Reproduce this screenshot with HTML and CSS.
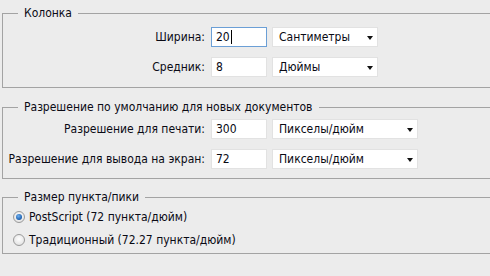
FILE: index.html
```html
<!DOCTYPE html>
<html lang="ru">
<head>
<meta charset="utf-8">
<title>Единицы измерения</title>
<link rel="stylesheet" href="styles.css">
</head>
<body>
<div class="panel">
  <fieldset class="group group-column">
    <legend>Колонка</legend>
    <div class="grid">
      <label class="lbl">Ширина:</label>
      <div class="field focused"><span>20</span><span class="caret"></span></div>
      <div class="dropdown narrow"><span>Сантиметры</span><span class="arrow"></span></div>

      <label class="lbl">Средник:</label>
      <div class="field"><span>8</span></div>
      <div class="dropdown narrow"><span>Дюймы</span><span class="arrow"></span></div>
    </div>
  </fieldset>

  <fieldset class="group group-res">
    <legend>Разрешение по умолчанию для новых документов</legend>
    <div class="grid">
      <label class="lbl">Разрешение для печати:</label>
      <div class="field"><span>300</span></div>
      <div class="dropdown wide"><span>Пикселы/дюйм</span><span class="arrow"></span></div>

      <label class="lbl">Разрешение для вывода на экран:</label>
      <div class="field"><span>72</span></div>
      <div class="dropdown wide"><span>Пикселы/дюйм</span><span class="arrow"></span></div>
    </div>
  </fieldset>

  <fieldset class="group group-pt">
    <legend>Размер пункта/пики</legend>
    <div class="radios">
      <div class="radio-row"><span class="radio checked"></span><span>PostScript (72 пункта/дюйм)</span></div>
      <div class="radio-row"><span class="radio"></span><span>Традиционный (72.27 пункта/дюйм)</span></div>
    </div>
  </fieldset>
</div>
</body>
</html>
```
FILE: styles.css
```css
html, body {
  margin: 0;
  padding: 0;
  background: #ececec;
  overflow: hidden;
}
body {
  font-family: "DejaVu Sans", sans-serif;
  font-stretch: semi-condensed;
  font-size: 12px;
  color: #0a0a14;
  width: 490px;
  height: 276px;
}
.panel {
  padding: 6px 0 0 2px;
}
.group {
  margin: 0;
  border: 1px solid #a3a3a3;
  border-right: none;
  padding: 0;
  min-width: 0;
}
.group legend {
  margin-left: 15px;
  padding: 0 6px;
  height: 15px;
  line-height: 15px;
}
.group-column { padding: 6px 0 10px 0; }
.group-res { margin-top: 12px; padding: 4px 0 9px 0; }
.group-pt { margin-top: 11px; padding: 1px 0 2px 0; }

.grid {
  display: grid;
  grid-template-columns: 202px 56px auto;
  column-gap: 6px;
  row-gap: 10px;
  align-items: center;
}
.lbl {
  text-align: right;
  white-space: nowrap;
}
.field {
  box-sizing: border-box;
  height: 20px;
  width: 56px;
  background: #fff;
  border: 1px solid #e2e2e2;
  padding: 0 4px;
  display: flex;
  align-items: center;
}
.field.focused {
  border-color: #6b9fd6;
}
.caret {
  display: inline-block;
  width: 1px;
  height: 14px;
  background: #000;
  margin-left: 1px;
}
.dropdown {
  box-sizing: border-box;
  height: 20px;
  background: #fff;
  border: 1px solid #e2e2e2;
  padding: 0 4px 0 6px;
  display: flex;
  align-items: center;
  justify-content: space-between;
  justify-self: start;
}
.dropdown.narrow { width: 106px; margin-left: -1px; }
.dropdown.wide { width: 146px; margin-left: -1px; }
.arrow {
  width: 0;
  height: 0;
  border-left: 3.5px solid transparent;
  border-right: 3.5px solid transparent;
  border-top: 4px solid #111;
  margin-top: 1px;
}
.radios {
  display: flex;
  flex-direction: column;
  gap: 1px;
}
.radio-row {
  height: 22px;
  display: flex;
  align-items: center;
  padding-left: 10px;
  gap: 4px;
}
.radio {
  box-sizing: border-box;
  width: 12px;
  height: 12px;
  border-radius: 50%;
  border: 1px solid #9a9a9a;
  background: radial-gradient(circle at 50% 40%, #ffffff 0%, #e6e6e6 70%, #d2d2d2 100%);
  display: flex;
  align-items: center;
  justify-content: center;
}
.radio.checked::after {
  content: "";
  width: 6px;
  height: 6px;
  border-radius: 50%;
  background: radial-gradient(circle at 40% 35%, #6fb0f0 0%, #1c5fae 70%, #123f7a 100%);
}
```
